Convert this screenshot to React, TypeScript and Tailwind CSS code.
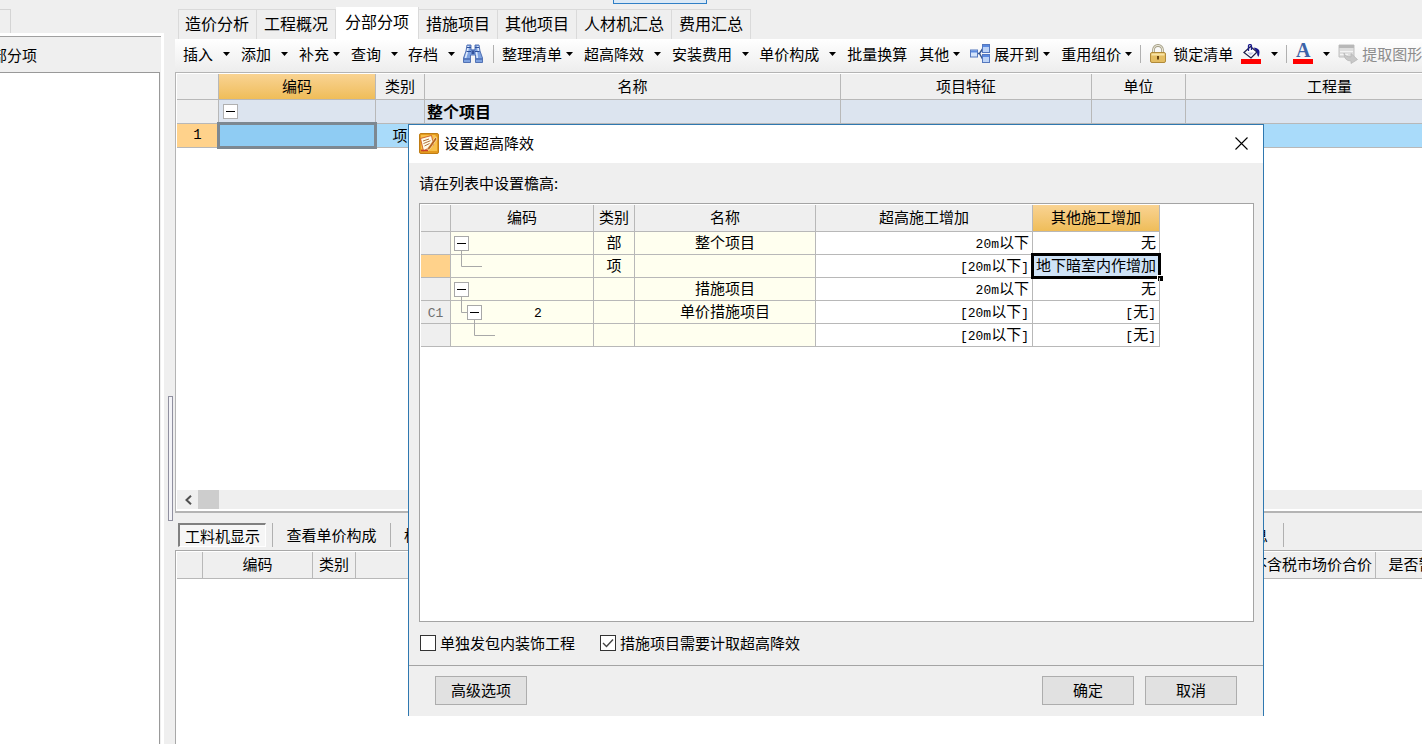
import React from "react";

const LINE = "border-[#b8b8b8]";

function Arrow() {
  return (
    <svg width="7" height="4" viewBox="0 0 7 4" className="shrink-0" aria-hidden="true">
      <path d="M0 0h7L3.5 4z" fill="#000" />
    </svg>
  );
}

function Binoculars() {
  return (
    <svg width="20" height="20" viewBox="0 0 20 20" className="shrink-0" aria-hidden="true">
      <path d="M4 1h4v4.500h4V1h4l1 6 2.500 7v4.500h-7V11h-5v7.500h-7V14L3 7z" fill="#7ea2e0" />
      <path d="M4 1h4v5h4V1h4l1 6 2.500 7v4.500h-7V11h-5v7.500h-7V14L3 7z" fill="none" stroke="#4668ae" strokeWidth=".9" />
      <path d="M5.300 2L4.500 7l-2 7M14.700 2l.8 5M13.500 8l.8 6" stroke="#dbe8fb" strokeWidth="1.600" fill="none" />
      <path d="M1 15h6M13 15h6M3.500 7.500h4.500M12 7.500h4.500M4 3.500h4M12 3.500h4" stroke="#2f519c" strokeWidth="1.200" />
      <path d="M8.500 6.500h3V10h-3z" fill="#35559e" />
    </svg>
  );
}

function TreeIcon() {
  return (
    <svg width="20" height="20" viewBox="0 0 20 20" className="shrink-0" aria-hidden="true">
      <path d="M7 9.500h2.500L12.500 5M9.500 9.500l3 5.500" fill="none" stroke="#34548f" strokeWidth="1.500" />
      <g stroke="#5578be" strokeWidth="1">
        <rect x=".5" y="6" width="7" height="7" fill="#d5e4fa" />
        <rect x="12.500" y=".5" width="7" height="8" fill="#bcd3f7" />
        <rect x="12.500" y="10.500" width="7" height="8" fill="#bcd3f7" />
      </g>
      <path d="M1 7.500h6M13 2h6M13 12h6" stroke="#5b8ae0" strokeWidth="2" />
    </svg>
  );
}

function LockIcon() {
  return (
    <svg width="18" height="20" viewBox="0 0 18 20" className="shrink-0" aria-hidden="true">
      <path d="M4.500 10V6a4.500 4.500 0 0 1 9 0v4" fill="none" stroke="#a39d84" strokeWidth="2.800" />
      <path d="M4.500 10V6a4.500 4.500 0 0 1 9 0v4" fill="none" stroke="#ece9da" strokeWidth="1.200" />
      <rect x="1.500" y="8.500" width="15" height="10" rx="1.500" fill="#e4bd62" stroke="#b08a3a" />
      <path d="M2.500 10.500h13" stroke="#f8e3a5" strokeWidth="2" />
      <path d="M9 12v3.500" stroke="#6a4610" strokeWidth="2" />
    </svg>
  );
}

function BucketIcon() {
  return (
    <svg width="20" height="20" viewBox="0 0 20 20" className="shrink-0" aria-hidden="true">
      <path d="M3 8.500L9.500 2.500l6.500 5.500-6 6z" fill="#fff" stroke="#20204a" strokeWidth="1.300" />
      <path d="M7.500 7V2q0-1.500 1.500-1.500t1.500 1.500v4" fill="none" stroke="#1d1d8c" strokeWidth="1.300" />
      <path d="M12.500 3.500q6 .5 6 4.500 0 3-1.200 5-1.300-1-1.300-5z" fill="#17178c" />
      <path d="M6 8.500h7l-3.500 3z" fill="#c8cce8" />
      <rect x="0" y="15" width="20" height="5" fill="#f00" />
    </svg>
  );
}

function FontColorIcon() {
  return (
    <span className="flex h-5 w-5 shrink-0 flex-col items-center border-b-[5px] border-[#f00]">
      <span className="font-['Liberation_Serif',serif] text-[20px] font-bold leading-[13px] text-[#3d63a8]">A</span>
    </span>
  );
}

function ExtractIcon() {
  return (
    <svg width="20" height="20" viewBox="0 0 20 20" className="shrink-0" aria-hidden="true">
      <path d="M1 1h15v12H1z" fill="#dedede" stroke="#c0c0c0" />
      <path d="M1 2.500h15" stroke="#b8b8b8" strokeWidth="3" />
      <path d="M2 7.500h13M2 10.500h8" stroke="#f4f4f4" strokeWidth="1.200" />
      <path d="M6 9q1 4 7 4V9.500l6.500 6-6.500 4V17q-7 0-7-8z" fill="#c8c8c8" stroke="#b8b8b8" strokeWidth=".8" />
    </svg>
  );
}

function AppIcon() {
  return (
    <svg width="20" height="21" viewBox="0 0 20 21" className="shrink-0" aria-hidden="true">
      <rect x=".5" y=".5" width="19" height="20" rx="1.500" fill="#e39a1e" stroke="#c07d14" />
      <path d="M2 2h14l2 2v14H4l-2-2z" fill="#f7c04a" />
      <path d="M1.500 5.500L12.500 2.500l2 9.500-10 6z" fill="#fffbe8" stroke="#c24a1c" strokeWidth=".8" />
      <path d="M4 8l6-2M4.500 10.500l7-2.800M5.500 13l5-2.500" stroke="#a8622a" strokeWidth=".9" />
      <path d="M16.500 4L9 14.500l-1 3 3-1.500L18 6z" fill="#b8641c" stroke="#fff2cf" strokeWidth=".6" />
      <path d="M2 17.500h7" stroke="#c9402a" strokeWidth="1.500" />
    </svg>
  );
}

function MenuItem({ label, wide = false, pad = "pr-[11px]", arrow = true }: { label: string; wide?: boolean; pad?: string; arrow?: boolean }) {
  return (
    <button type="button" className={`flex shrink-0 items-center whitespace-nowrap ${wide ? "gap-[10px]" : "gap-1"} ${pad}`}>
      {label}
      {arrow && <Arrow />}
    </button>
  );
}

function Divider({ className = "", tall = false }: { className?: string; tall?: boolean }) {
  return <span className={`${tall ? "h-6" : "h-[18px]"} w-px shrink-0 bg-[#b0b0b0] ${className}`} />;
}

function Toolbar() {
  return (
    <div className="flex h-[33px] items-center overflow-hidden bg-linear-to-b from-white to-[#ededed] pb-[3px] pl-2 text-[15px] leading-5">
      <MenuItem label="插入" wide />
      <MenuItem label="添加" wide />
      <MenuItem label="补充" />
      <MenuItem label="查询" wide pad="pr-2.5" />
      <MenuItem label="存档" wide pad="pr-2" />
      <button type="button" aria-label="查找" className="shrink-0"><Binoculars /></button>
      <Divider className="ml-2.5 mr-2" />
      <MenuItem label="整理清单" />
      <MenuItem label="超高降效" wide />
      <MenuItem label="安装费用" wide pad="pr-2.5" />
      <MenuItem label="单价构成" wide />
      <MenuItem label="批量换算" arrow={false} pad="pr-3" />
      <MenuItem label="其他" pad="pr-2.5" />
      <TreeIcon />
      <span className="w-1 shrink-0" />
      <MenuItem label="展开到" />
      <MenuItem label="重用组价" pad="pr-2" />
      <Divider className="mr-2" />
      <button type="button" className="flex shrink-0 items-center gap-1.5 whitespace-nowrap pr-2">
        <LockIcon />锁定清单
      </button>
      <button type="button" aria-label="填充颜色" className="flex shrink-0 items-center gap-2.5 pr-2">
        <BucketIcon /><Arrow />
      </button>
      <Divider className="mr-1.5" />
      <button type="button" aria-label="字体颜色" className="flex shrink-0 items-center gap-2.5 pr-2">
        <FontColorIcon /><Arrow />
      </button>
      <button type="button" disabled className="flex shrink-0 items-center gap-1 whitespace-nowrap text-[#8c8c8c]">
        <ExtractIcon />提取图形
      </button>
    </div>
  );
}

const TABS = ["造价分析", "工程概况", "分部分项", "措施项目", "其他项目", "人材机汇总", "费用汇总"];

function Tabs() {
  return (
    <div role="tablist" className="flex h-[35px] items-end overflow-hidden pl-[3px] text-base leading-5">
      {TABS.map((t) =>
        t === "分部分项" ? (
          <button key={t} type="button" role="tab" aria-selected className="h-8 shrink-0 whitespace-nowrap border-r border-[#dadada] bg-white px-[9px] pb-1">
            {t}
          </button>
        ) : (
          <button key={t} type="button" role="tab" aria-selected={false} className="h-[30px] shrink-0 whitespace-nowrap border-r border-t border-[#dadada] px-[7px] pb-[3px] first:border-l first:pl-1.5">
            {t}
          </button>
        ),
      )}
    </div>
  );
}

const cell = `border-b border-r px-0 pb-0.5 pt-0 ${LINE}`;
const GOLD = "bg-linear-to-b from-[#f9d392] to-[#efbd58]";

function MainGrid() {
  return (
    <div className="flex h-[441px] shrink-0 flex-col overflow-hidden border-b-2 border-l border-t border-[#b4b4b4] bg-white pl-px pt-px">
      <table className="w-[1297px] table-fixed border-separate border-spacing-0 text-[15px] leading-5">
        <colgroup>
          <col className="w-[42px]" /><col className="w-[157px]" /><col className="w-[49px]" /><col className="w-[416px]" />
          <col className="w-[251px]" /><col className="w-[94px]" /><col className="w-[288px]" />
        </colgroup>
        <thead>
          <tr className="h-[26px] bg-[#efefef]">
            <th className={cell} />
            <th className={`${cell} ${GOLD} font-normal`}>编码</th>
            {["类别", "名称", "项目特征", "单位", "工程量"].map((h) => (
              <th key={h} className={`${cell} font-normal`}>{h}</th>
            ))}
          </tr>
        </thead>
        <tbody>
          <tr className="h-6 bg-[#dce4ef]">
            <td className={`${cell} bg-[#efefef]`} />
            <td className={cell}>
              <button type="button" aria-label="折叠" className="ml-1 mt-0.5 flex h-[15px] w-[15px] items-center justify-center border border-[#b0b0b0] bg-white">
                <span className="h-px w-[9px] bg-black" />
              </button>
            </td>
            <td className={cell} />
            <td className={`${cell} pl-0.5 text-base font-bold leading-5`}>整个项目</td>
            <td className={cell} /><td className={cell} /><td className={cell} />
          </tr>
          <tr className="h-6 bg-[#a9dbfa]">
            <td className={`${cell} bg-[#ffd28b] text-center font-['Liberation_Mono','Noto_Sans_CJK_SC',monospace] text-sm leading-5`}>1</td>
            <td className={`${cell} relative`}>
              <span className="absolute -bottom-0.5 -left-0.5 -right-0.5 -top-0.5 border-[3px] border-[#7d8891] bg-[#8fccf3]" />
            </td>
            <td className={`${cell} text-center`}>项</td>
            <td className={cell} /><td className={cell} /><td className={cell} /><td className={cell} />
          </tr>
        </tbody>
      </table>
      <div className="mb-[2px] mt-auto flex h-[19px] items-center bg-[#efefef] pl-1">
        <button type="button" aria-label="向左滚动" className="flex h-full w-[17px] items-center justify-start pl-1">
          <svg width="7" height="10" viewBox="0 0 7 10" aria-hidden="true">
            <path d="M6 .8L1.500 5 6 9.200" fill="none" stroke="#505050" strokeWidth="2" />
          </svg>
        </button>
        <span className="h-full w-[21px] bg-[#cdcdcd]" />
      </div>
    </div>
  );
}

function DetailPane() {
  return (
    <>
      <div className="flex h-[37px] shrink-0 items-start overflow-hidden pl-[3px] pt-2.5 text-[15px] leading-5">
        <button type="button" className="h-6 w-[88px] shrink-0 whitespace-nowrap border-b border-l-2 border-r border-t-2 border-b-white border-l-[#808080] border-r-white border-t-[#808080] bg-[#f6f6f6]">
          工料机显示
        </button>
        <Divider tall className="ml-1.5" />
        <button type="button" className="h-6 w-[117px] shrink-0">查看单价构成</button>
        <Divider tall />
        <button type="button" className="ml-[13px] h-6 w-[849px] shrink-0 text-left">标</button>
        <button type="button" className="h-6 w-[30px] shrink-0 text-left">息</button>
        <Divider tall />
      </div>
      <div className="flex-1 overflow-hidden border-l border-t border-[#a8a8a8] bg-white pl-px pt-px">
        <table className="w-[1285px] table-fixed border-separate border-spacing-0 text-[15px] leading-5">
          <colgroup>
            <col className="w-[26px]" /><col className="w-[110px]" /><col className="w-[43px]" /><col className="w-[893px]" />
            <col className="w-[127px]" /><col className="w-[86px]" />
          </colgroup>
          <thead>
            <tr className="h-[27px] bg-[#efefef]">
              <th className={cell} />
              <th className={`${cell} font-normal`}>编码</th>
              <th className={`${cell} font-normal`}>类别</th>
              <th className={cell} />
              <th className={`${cell} whitespace-nowrap font-normal`}>不含税市场价合价</th>
              <th className={`${cell} whitespace-nowrap font-normal`}>是否暂估</th>
            </tr>
          </thead>
        </table>
      </div>
    </>
  );
}

type Node = "root" | "leaf" | "child" | "subleaf";

const ROWS: { id: string; node: Node; code: string; kind: string; name: string; high: string; other: string; active?: boolean }[] = [
  { id: "", node: "root", code: "", kind: "部", name: "整个项目", high: "20m以下", other: "无" },
  { id: "", node: "leaf", code: "", kind: "项", name: "", high: "[20m以下]", other: "地下暗室内作增加", active: true },
  { id: "", node: "root", code: "", kind: "", name: "措施项目", high: "20m以下", other: "无" },
  { id: "C1", node: "child", code: "2", kind: "", name: "单价措施项目", high: "[20m以下]", other: "[无]" },
  { id: "", node: "subleaf", code: "", kind: "", name: "", high: "[20m以下]", other: "[无]" },
];

function ToggleBox({ x }: { x: number }) {
  return (
    <g>
      <rect x={x + 0.5} y="4.5" width="14" height="14" fill="#fff" stroke="#a8a8a8" />
      <path d={`M${x + 3} 11.500h9`} stroke="#000" />
    </g>
  );
}

function TreeCell({ node }: { node: Node }) {
  return (
    <svg width="45" height="20" viewBox="0 0 45 20" className="-mr-[13px] block shrink-0 overflow-visible" aria-hidden="true">
      <g fill="none" stroke="#a8a8a8">
        {node === "root" && <path d="M10.500 18v5" />}
        {node === "leaf" && <path d="M10.500 0v11.500H31" />}
        {node === "child" && <path d="M10.500 0v11.500H17M23.500 18v5" />}
        {node === "subleaf" && <path d="M23.500 0v11.500H44" />}
      </g>
      {node === "root" && <ToggleBox x={3} />}
      {node === "child" && <ToggleBox x={16} />}
    </svg>
  );
}

/** Sets Latin runs in a narrow monospace face beside the Chinese text. */
function Mixed({ text }: { text: string }) {
  return (
    <>
      {text.split(/([\[\]0-9a-z]+)/i).map((part, i) =>
        i % 2 ? (
          <span key={i} className="font-['Liberation_Mono',monospace] text-[13px] leading-none">{part}</span>
        ) : (
          part
        ),
      )}
    </>
  );
}

function HeightTable() {
  return (
    <table className="w-[739px] table-fixed border-separate border-spacing-0 text-[15px] leading-5">
      <colgroup>
        <col className="w-[30px]" /><col className="w-[143px]" /><col className="w-[41px]" />
        <col className="w-[181px]" /><col className="w-[217px]" /><col className="w-[127px]" />
      </colgroup>
      <thead>
        <tr className="h-[27px] bg-[#efefef]">
          <th className={cell} />
          {["编码", "类别", "名称", "超高施工增加"].map((h) => (
            <th key={h} className={`${cell} font-normal`}>{h}</th>
          ))}
          <th className={`${cell} ${GOLD} font-normal`}>其他施工增加</th>
        </tr>
      </thead>
      <tbody>
        {ROWS.map((r, i) => (
          <tr key={i} className="h-[23px]">
            <td className={`${cell} text-center text-[#707070] ${r.active ? "bg-[#ffd28b]" : "bg-[#efefef]"}`}><Mixed text={r.id} /></td>
            <td className={`${cell} bg-[#ffffef]`}>
              <div className="flex h-5 items-center">
                <TreeCell node={r.node} />
                <span className="flex-1 text-center"><Mixed text={r.code} /></span>
              </div>
            </td>
            <td className={`${cell} bg-[#ffffef] text-center`}>{r.kind}</td>
            <td className={`${cell} bg-[#ffffef] text-center`}>{r.name}</td>
            <td className={`${cell} pr-[3px] text-right`}><Mixed text={r.high} /></td>
            <td className={`${cell} relative whitespace-nowrap pr-[3px] text-right ${r.active ? "bg-[#cfe3f7]" : ""}`}>
              <Mixed text={r.other} />
              {r.active && (
                <>
                  <span className="absolute -bottom-0.5 -left-0.5 -right-0.5 -top-0.5 border-[3px] border-black" />
                  <span className="absolute -bottom-1 -right-1 h-[6px] w-[6px] border-l border-t border-white bg-black" />
                </>
              )}
            </td>
          </tr>
        ))}
      </tbody>
    </table>
  );
}

function Check({ label, checked = false }: { label: string; checked?: boolean }) {
  return (
    <label className="flex items-center gap-1 whitespace-nowrap">
      <span className="grid h-4 w-4 place-items-center">
        <input type="checkbox" defaultChecked={checked} className="peer col-start-1 row-start-1 h-4 w-4 appearance-none border border-[#333] bg-white" />
        <svg width="12" height="10" viewBox="0 0 12 10" className="pointer-events-none invisible relative col-start-1 row-start-1 peer-checked:visible" aria-hidden="true">
          <path d="M1 5l3.500 3.500L11 1.500" fill="none" stroke="#444" strokeWidth="1.400" />
        </svg>
      </span>
      {label}
    </label>
  );
}

function PushButton({ children }: { children: React.ReactNode }) {
  return (
    <button type="button" className="h-[29px] w-[92px] border border-[#adadad] bg-[#e1e1e1] pb-px">{children}</button>
  );
}

function HeightDialog() {
  return (
    <section role="dialog" aria-labelledby="dialog-title" className="absolute left-[408px] top-[124px] flex w-[856px] flex-col border-x border-t border-[#2f78b0] bg-[#efefef] text-[15px] leading-5">
      <header className="flex h-[38px] items-center bg-white pb-0.5 pl-2.5 pr-[15px]">
        <AppIcon />
        <h2 id="dialog-title" className="ml-[5px] flex-1">设置超高降效</h2>
        <button type="button" aria-label="关闭">
          <svg width="13" height="13" viewBox="0 0 13 13" aria-hidden="true">
            <path d="M.5.5l12 12M12.500.5l-12 12" stroke="#000" strokeWidth="1.100" />
          </svg>
        </button>
      </header>
      <div className="flex flex-col pl-2.5 pr-[9px]">
        <p className="flex h-10 items-center">请在列表中设置檐高:</p>
        <div className="h-[419px] border border-[#a4a4a4] bg-white pl-px pt-px">
          <HeightTable />
        </div>
        <div className="flex h-[43px] items-center gap-[25px] pb-0.5 pl-px">
          <Check label="单独发包内装饰工程" />
          <Check label="措施项目需要计取超高降效" checked />
        </div>
      </div>
      <footer className="flex h-[51px] items-center gap-[11px] border-t border-[#a4a4a4] pb-px pl-[26px] pr-[26px]">
        <PushButton>高级选项</PushButton>
        <span className="flex-1" />
        <PushButton>确定</PushButton>
        <PushButton>取消</PushButton>
      </footer>
    </section>
  );
}

export default function App() {
  return (
    <div className="relative flex h-screen flex-col overflow-hidden bg-[#efefef] font-['Noto_Sans_CJK_SC','Liberation_Sans',sans-serif] text-black">
      <div className="flex h-1 shrink-0 pl-[613px]">
        <span className="w-[94px] border-x border-b border-[#2f7fc6] bg-[#dbe9f6]" />
      </div>
      <div className="flex min-h-0 flex-1">
        <aside className="flex w-[164px] shrink-0 flex-col pt-[5px]">
          <div className="h-6 w-[11px] shrink-0 border-r border-t border-[#d4d4d4]" />
          <div className="flex min-h-0 flex-1 flex-col border-r-[3px] border-t-[3px] border-white">
            <div className="flex h-[36px] shrink-0 items-center justify-start overflow-hidden border-t border-[#a0a0a0]">
              <span className="-ml-[23px] whitespace-nowrap text-[15px] leading-5">分部分项</span>
            </div>
            <div className="mr-px flex-1 border-r border-t border-[#999] bg-white" />
          </div>
        </aside>
        <div className="flex w-[11px] shrink-0 justify-end pr-0.5 pt-[392px]">
          <span className="h-[125px] w-[5px] border border-[#9090a0] bg-[#f4f4f8]" />
        </div>
        <main className="flex min-w-0 flex-1 flex-col">
          <Tabs />
          <Toolbar />
          <MainGrid />
          <DetailPane />
        </main>
      </div>
      <HeightDialog />
    </div>
  );
}
